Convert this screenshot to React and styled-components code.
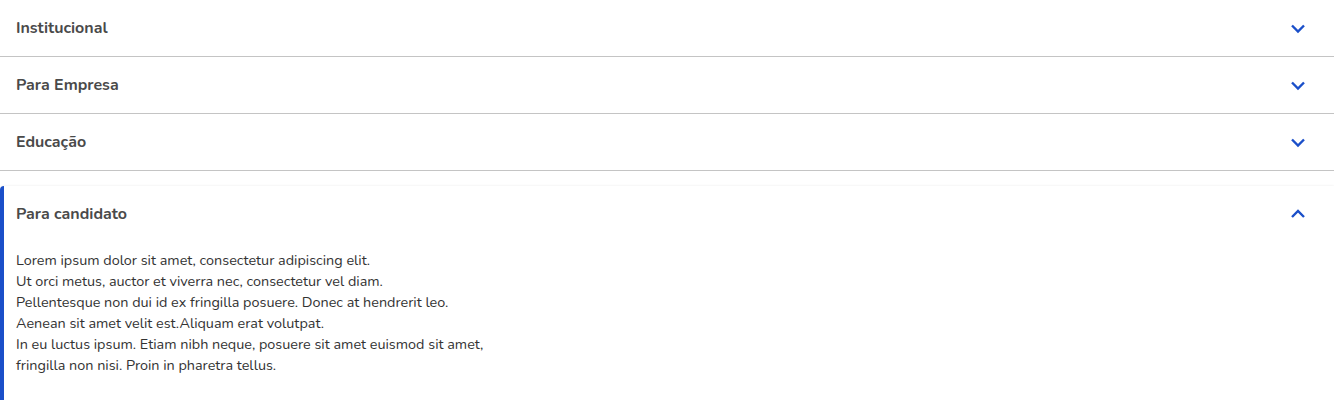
import React, { useState } from 'react';
import styled, { createGlobalStyle } from 'styled-components';

const GlobalStyle = createGlobalStyle`
  body {
    margin: 0;
    background: #ffffff;
    font-family: "Nunito", "Lato", "Open Sans", sans-serif;
  }
`;

const List = styled.div`
  display: flex;
  flex-direction: column;
  width: 1334px;
`;

const Item = styled.div`
  background: #ffffff;
  border-bottom: ${p => (p.$open ? 'none' : '1px solid #c4c4c4')};
  ${p => p.$open && `
    margin-top: 15px;
    border-left: 4px solid #1a4fc9;
    border-radius: 4px 0 0 0;
    box-shadow: 0 -1px 2px rgba(0,0,0,0.04);
    padding-bottom: 24px;
  `}
`;

const Header = styled.button`
  display: flex;
  align-items: center;
  justify-content: space-between;
  width: 100%;
  height: 56px;
  padding: ${p => (p.$open ? '0 29px 0 12px' : '0 29px 0 16px')};
  background: none;
  border: none;
  cursor: pointer;
  font-family: inherit;
  box-sizing: border-box;
`;

const Title = styled.span`
  font-size: 16px;
  font-weight: 700;
  color: #4a4a4a;
`;

const Body = styled.div`
  padding: 8px 16px 0 12px;
  font-size: 14.4px;
  line-height: 21px;
  color: #333333;
`;

const Chevron = ({ up }) => (
  <svg width="14" height="14" viewBox="0 0 14 14" fill="none">
    <path
      d={up ? 'M1 10L7 4L13 10' : 'M1 4.5L7 10.5L13 4.5'}
      stroke="#1a4fc9"
      strokeWidth="2.4"
    />
  </svg>
);

const sections = [
  { title: 'Institucional' },
  { title: 'Para Empresa' },
  { title: 'Educação' },
  {
    title: 'Para candidato',
    lines: [
      'Lorem ipsum dolor sit amet, consectetur adipiscing elit.',
      'Ut orci metus, auctor et viverra nec, consectetur vel diam.',
      'Pellentesque non dui id ex fringilla posuere. Donec at hendrerit leo.',
      'Aenean sit amet velit est.Aliquam erat volutpat.',
      'In eu luctus ipsum. Etiam nibh neque, posuere sit amet euismod sit amet,',
      'fringilla non nisi. Proin in pharetra tellus.',
    ],
  },
];

export default function App() {
  const [open, setOpen] = useState(3);
  return (
    <>
      <GlobalStyle />
      <List>
        {sections.map((s, i) => {
          const isOpen = open === i;
          return (
            <Item key={s.title} $open={isOpen}>
              <Header $open={isOpen} onClick={() => setOpen(isOpen ? -1 : i)}>
                <Title>{s.title}</Title>
                <Chevron up={isOpen} />
              </Header>
              {isOpen && s.lines && (
                <Body>
                  {s.lines.map(l => (
                    <div key={l}>{l}</div>
                  ))}
                </Body>
              )}
            </Item>
          );
        })}
      </List>
    </>
  );
}
